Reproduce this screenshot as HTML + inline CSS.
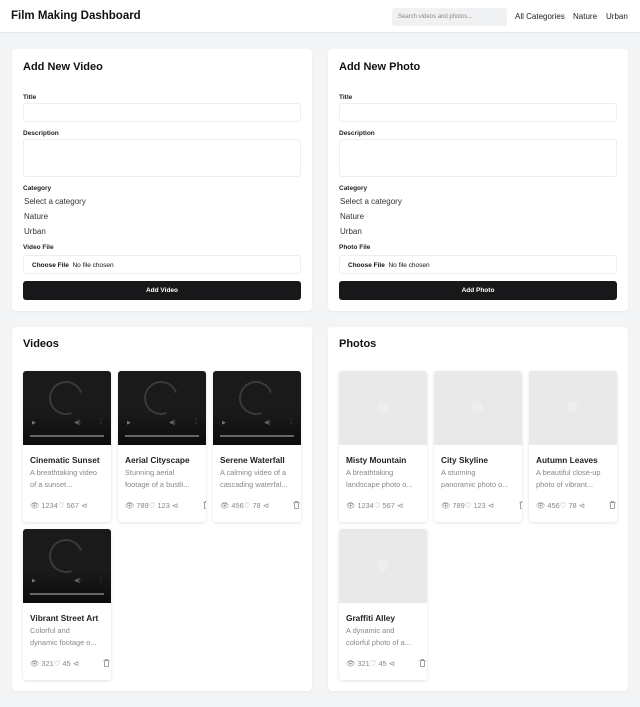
<!DOCTYPE html><html><head><style>
*{box-sizing:border-box;margin:0;padding:0}
body{width:640px;height:707px;background:#f3f4f6;font-family:"Liberation Sans",sans-serif;color:#111;position:relative;overflow:hidden}
.hdr{position:absolute;left:0;top:0;width:640px;height:33px;background:#fff;border-bottom:1px solid #e5e7eb}
.hdr h1{position:absolute;left:11px;top:10px;font-size:11.5px;font-weight:bold}
.search{position:absolute;left:392px;top:8px;width:115px;height:18px;background:#f0f1f3;border-radius:3px;font-size:6px;color:#888;padding:6px 6px}
.nav{position:absolute;top:12px;font-size:8px;color:#222}
.panel{position:absolute;background:#fff;border-radius:4px;box-shadow:0 1px 2px rgba(0,0,0,.05)}
.panel h2{position:absolute;left:11px;top:11px;font-size:11px;font-weight:bold}
.lbl{position:absolute;left:11px;font-size:6.5px;font-weight:bold;color:#222}
.inp{position:absolute;left:11px;width:278px;border:1px solid #eceef1;border-radius:3px}
.opt{position:absolute;left:12px;font-size:8px;color:#333}
.file{position:absolute;left:11px;width:278px;height:19px;border:1px solid #eceef1;border-radius:3px;font-size:6.5px;padding:6px 8px}
.btn{position:absolute;left:11px;width:278px;height:19px;background:#18181b;border-radius:3px;color:#fff;font-size:6.5px;font-weight:bold;text-align:center;line-height:19px}
.card{position:absolute;width:88px;height:151px;background:#fff;border-radius:3px;box-shadow:0 1px 3px rgba(0,0,0,.12);overflow:hidden}
.media{height:74px;position:relative}
.vid{background:linear-gradient(#1a1a1a 55%,#0c0c0c)}
.vid .sp{position:absolute;left:26px;top:10px;width:34px;height:34px;border:2px solid #3a3a3a;border-right-color:transparent;border-radius:50%;transform:rotate(25deg)}
.vid .bar{position:absolute;left:7px;right:7px;top:64px;height:1.5px;background:#666}
.vid .pl{position:absolute;left:9px;top:49px;font-size:5px;color:#777}
.vid .vo{position:absolute;left:51px;top:48px;font-size:6px;color:#666}
.vid .dt{position:absolute;left:75px;top:47px;font-size:6px;color:#666}
.pho{background:#e9e9e9}
.pho .c{position:absolute;left:38px;top:31px;width:11px;height:11px;border-radius:50%;background:#eee}
.card h3{position:absolute;left:7px;top:84px;font-size:8.3px;font-weight:bold;color:#222;white-space:nowrap}
.card p{position:absolute;left:7px;top:96px;width:68px;font-size:7.4px;line-height:12px;color:#888}
.st{position:absolute;left:7px;top:130px;font-size:7.4px;color:#888;white-space:nowrap}
.tr{position:absolute;left:80px;top:130px;width:7px;height:8px}
</style></head><body>
<div class="hdr"><h1>Film Making Dashboard</h1><div class="search">Search videos and photos...</div>
<span class="nav" style="left:515px">All Categories</span><span class="nav" style="left:573px">Nature</span><span class="nav" style="left:606px">Urban</span></div>

<div class="panel" style="left:12px;top:49px;width:300px;height:262px">
<h2 style="top:12px">Add New Video</h2>
<div class="lbl" style="top:45px">Title</div><div class="inp" style="top:54px;height:19px"></div>
<div class="lbl" style="top:81px">Description</div><div class="inp" style="top:90px;height:38px"></div>
<div class="lbl" style="top:136px">Category</div>
<div class="opt" style="top:148px">Select a category</div><div class="opt" style="top:163px">Nature</div><div class="opt" style="top:178px">Urban</div>
<div class="lbl" style="top:195px">Video File</div>
<div class="file" style="top:206px"><b>Choose File</b>&nbsp; No file chosen</div>
<div class="btn" style="top:232px">Add Video</div></div>

<div class="panel" style="left:328px;top:49px;width:300px;height:262px">
<h2 style="top:12px">Add New Photo</h2>
<div class="lbl" style="top:45px">Title</div><div class="inp" style="top:54px;height:19px"></div>
<div class="lbl" style="top:81px">Description</div><div class="inp" style="top:90px;height:38px"></div>
<div class="lbl" style="top:136px">Category</div>
<div class="opt" style="top:148px">Select a category</div><div class="opt" style="top:163px">Nature</div><div class="opt" style="top:178px">Urban</div>
<div class="lbl" style="top:195px">Photo File</div>
<div class="file" style="top:206px"><b>Choose File</b>&nbsp; No file chosen</div>
<div class="btn" style="top:232px">Add Photo</div></div>

<div class="panel" style="left:12px;top:327px;width:300px;height:364px"><h2>Videos</h2></div>
<div class="panel" style="left:328px;top:327px;width:300px;height:364px"><h2>Photos</h2></div>

<svg width="0" height="0" style="position:absolute"><defs><symbol id="t" viewBox="0 0 7 8"><path d="M0.5 1.5h6M2.5 1.5V.5h2v1M1.2 1.5l.5 6h3.6l.5-6" fill="none" stroke="#888" stroke-width=".8"/></symbol></defs></svg>

<div class="card" style="left:23px;top:371px"><div class="media vid"><div class="sp"></div><span class="pl">▶</span><span class="vo">◀)</span><span class="dt">⋮</span><div class="bar"></div></div><h3>Cinematic Sunset</h3><p>A breathtaking video of a sunset...</p><div class="st">👁 1234♡ 567 ⊲</div></div>
<div class="card" style="left:118px;top:371px"><div class="media vid"><div class="sp"></div><span class="pl">▶</span><span class="vo">◀)</span><span class="dt">⋮</span><div class="bar"></div></div><h3>Aerial Cityscape</h3><p>Stunning aerial footage of a bustli...</p><div class="st">👁 789♡ 123 ⊲</div><svg class="tr" style="left:85px"><use href="#t"/></svg></div>
<div class="card" style="left:213px;top:371px"><div class="media vid"><div class="sp"></div><span class="pl">▶</span><span class="vo">◀)</span><span class="dt">⋮</span><div class="bar"></div></div><h3>Serene Waterfall</h3><p>A calming video of a cascading waterfal...</p><div class="st">👁 456♡ 78 ⊲</div><svg class="tr"><use href="#t"/></svg></div>
<div class="card" style="left:23px;top:529px"><div class="media vid"><div class="sp"></div><span class="pl">▶</span><span class="vo">◀)</span><span class="dt">⋮</span><div class="bar"></div></div><h3>Vibrant Street Art</h3><p>Colorful and dynamic footage o...</p><div class="st">👁 321♡ 45 ⊲</div><svg class="tr"><use href="#t"/></svg></div>

<div class="card" style="left:339px;top:371px"><div class="media pho"><div class="c"></div></div><h3>Misty Mountain</h3><p>A breathtaking landscape photo o...</p><div class="st">👁 1234♡ 567 ⊲</div></div>
<div class="card" style="left:434px;top:371px"><div class="media pho"><div class="c"></div></div><h3>City Skyline</h3><p>A stunning panoramic photo o...</p><div class="st">👁 789♡ 123 ⊲</div><svg class="tr" style="left:85px"><use href="#t"/></svg></div>
<div class="card" style="left:529px;top:371px"><div class="media pho"><div class="c"></div></div><h3>Autumn Leaves</h3><p>A beautiful close-up photo of vibrant...</p><div class="st">👁 456♡ 78 ⊲</div><svg class="tr"><use href="#t"/></svg></div>
<div class="card" style="left:339px;top:529px"><div class="media pho"><div class="c"></div></div><h3>Graffiti Alley</h3><p>A dynamic and colorful photo of a...</p><div class="st">👁 321♡ 45 ⊲</div><svg class="tr"><use href="#t"/></svg></div>
</body></html>
